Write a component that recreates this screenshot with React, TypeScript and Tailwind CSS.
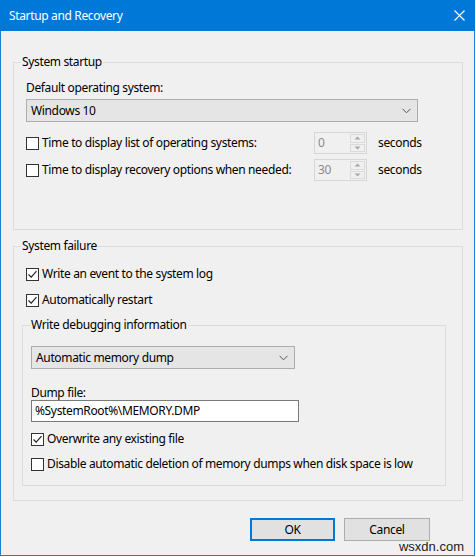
import type { ReactNode } from "react";

function CheckBox({ checked, children }: { checked?: boolean; children: ReactNode }) {
  return (
    <label className="flex items-center h-[16px] leading-[16px]">
      <span className="w-[13px] h-[13px] border border-[#333333] bg-white flex items-center justify-center shrink-0">
        {checked && (
          <svg width="11" height="11" viewBox="0 0 11 11">
            <path d="M1.5 5.5 L4.2 8.2 L9.5 2.2" fill="none" stroke="#222" strokeWidth="1.2" />
          </svg>
        )}
      </span>
      <span className="ml-[3px] whitespace-nowrap">{children}</span>
    </label>
  );
}

function GroupBox({ title, className, children }: { title: string; className?: string; children: ReactNode }) {
  return (
    <fieldset className={`border border-[#dcdcdc] ${className ?? ""}`}>
      <legend className="ml-[7px] px-[1px] leading-[16px]">{title}</legend>
      {children}
    </fieldset>
  );
}

function Combo({ value, className }: { value: string; className?: string }) {
  return (
    <div className={`h-[23px] bg-[#e5e5e5] border border-[#adadad] flex items-center pl-[4px] pr-[6px] ${className ?? ""}`}>
      <span className="flex-1">{value}</span>
      <svg width="9" height="6" viewBox="0 0 9 6">
        <path d="M0.5 0.8 L4.5 4.8 L8.5 0.8" fill="none" stroke="#555" strokeWidth="1" />
      </svg>
    </div>
  );
}

function Spinner({ value }: { value: string }) {
  return (
    <div className="w-[53px] h-[22px] border border-[#d6d6d6] bg-[#f0f0f0] flex">
      <span className="flex-1 pl-[3px] leading-[20px] text-[#8a8a8a]">{value}</span>
      <div className="w-[17px] flex flex-col gap-[1px] p-[1px]">
        <div className="flex-1 border border-[#dadada] flex items-center justify-center">
          <svg width="7" height="4" viewBox="0 0 7 4">
            <path d="M0.5 3.5 L3.5 0.5 L6.5 3.5 Z" fill="#a8a8a8" />
          </svg>
        </div>
        <div className="flex-1 border border-[#dadada] flex items-center justify-center">
          <svg width="7" height="4" viewBox="0 0 7 4">
            <path d="M0.5 0.5 L3.5 3.5 L6.5 0.5 Z" fill="#a8a8a8" />
          </svg>
        </div>
      </div>
    </div>
  );
}

export default function App() {
  return (
    <div className="relative w-[476px] h-[557px] bg-white text-[12px] tracking-[-0.35px] text-black font-['Noto_Sans',sans-serif]">
      <div className="w-[475px] h-[556px] bg-[#f0f0f0] border-l border-r border-b border-[#1c7fd6] flex flex-col">
        {/* title bar */}
        <div className="h-[31px] -mx-[1px] bg-[#0078d7] flex items-center pl-[9px] pr-[10px] text-white">
          <span className="flex-1">Startup and Recovery</span>
          <svg width="11" height="11" viewBox="0 0 11 11">
            <path d="M0.5 0.5 L10.5 10.5 M10.5 0.5 L0.5 10.5" stroke="#fff" strokeWidth="1.1" />
          </svg>
        </div>

        <div className="pt-[23px] pl-[12px]">
          <GroupBox title="System startup" className="w-[450px]">
            <div className="pl-[12px] pt-[10px] pb-[48px]">
              <div className="leading-[16px]">Default operating system:</div>
              <Combo value="Windows 10" className="mt-[3px] w-[392px]" />
              <div className="mt-[10px] h-[22px] flex items-center">
                <div className="w-[288px]">
                  <CheckBox>Time to display list of operating systems:</CheckBox>
                </div>
                <Spinner value="0" />
                <span className="ml-[11px]">seconds</span>
              </div>
              <div className="mt-[5px] h-[22px] flex items-center">
                <div className="w-[288px]">
                  <CheckBox>Time to display recovery options when needed:</CheckBox>
                </div>
                <Spinner value="30" />
                <span className="ml-[11px]">seconds</span>
              </div>
            </div>
          </GroupBox>

          <GroupBox title="System failure" className="w-[450px] mt-[8px]">
            <div className="pl-[8px] pt-[12px] pb-[14px]">
              <div className="pl-[4px]">
                <CheckBox checked>Write an event to the system log</CheckBox>
              </div>
              <div className="pl-[4px] mt-[10px]">
                <CheckBox checked>Automatically restart</CheckBox>
              </div>
              <GroupBox title="Write debugging information" className="w-[424px] mt-[9px]">
                <div className="pl-[8px] pt-[13px] pb-[13px]">
                  <Combo value="Automatic memory dump" className="w-[264px]" />
                  <div className="mt-[17px] leading-[14px]">Dump file:</div>
                  <div className="w-[268px] h-[22px] bg-white border border-[#7a7a7a] pl-[3px] leading-[20px]">
                    %SystemRoot%\MEMORY.DMP
                  </div>
                  <div className="mt-[9px]">
                    <CheckBox checked>Overwrite any existing file</CheckBox>
                  </div>
                  <div className="mt-[9px]">
                    <CheckBox>Disable automatic deletion of memory dumps when disk space is low</CheckBox>
                  </div>
                </div>
              </GroupBox>
            </div>
          </GroupBox>

          <div className="mt-[17px] ml-[237px] flex gap-[9px]">
            <button className="w-[85px] h-[23px] bg-[#e1e1e1] border-2 border-[#0078d7]">OK</button>
            <button className="w-[86px] h-[23px] bg-[#e1e1e1] border border-[#adadad]">Cancel</button>
          </div>
        </div>
      </div>

      <span className="absolute right-[12px] top-[539px] leading-[15px] text-[13px] tracking-normal text-[#222] font-['Liberation_Sans',sans-serif]">
        wsxdn.com
      </span>
    </div>
  );
}
